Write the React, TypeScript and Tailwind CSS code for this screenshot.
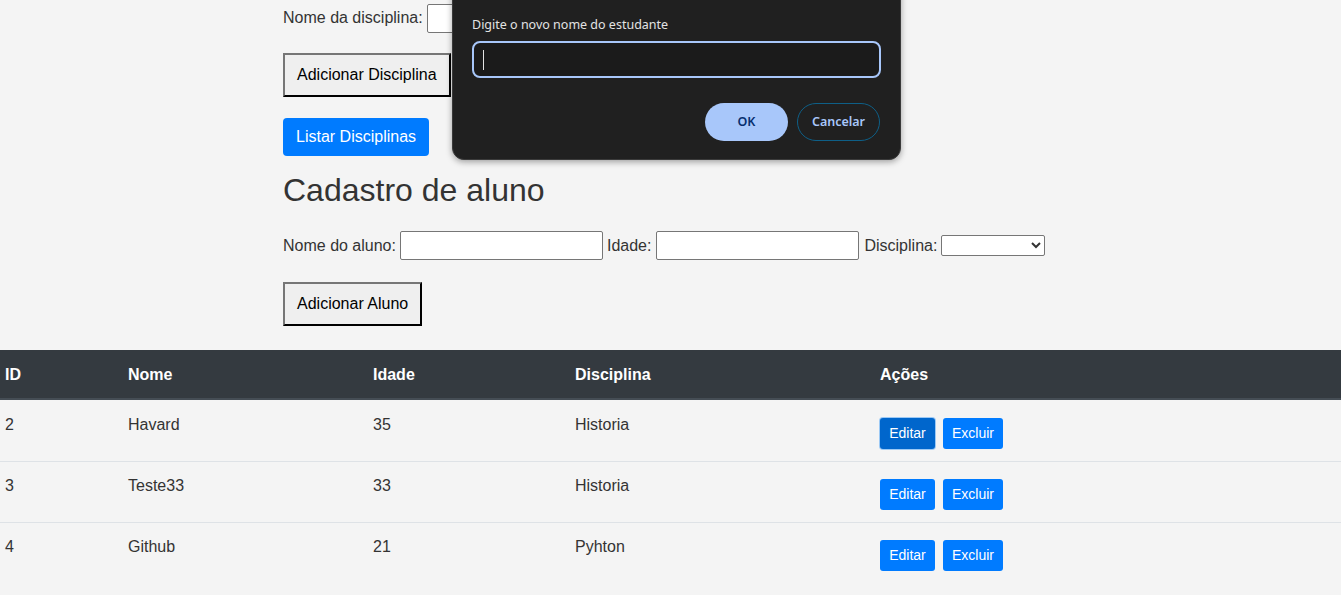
import React from 'react';

// linhas da tabela de alunos
const ALUNOS = [
  { id: 2, nome: 'Havard', idade: 35, disciplina: 'Historia' },
  { id: 3, nome: 'Teste33', idade: 33, disciplina: 'Historia' },
  { id: 4, nome: 'Github', idade: 21, disciplina: 'Pyhton' },
];

const COLS = 'grid grid-cols-[123px_245px_202px_305px_1fr]';

const GrayButton = ({ children }: { children: React.ReactNode }) => (
  <button
    type="button"
    className="h-[44px] px-[12px] bg-[#efefef] text-black text-[16px] border-2 border-t-[#767676] border-l-[#767676] border-b-black border-r-black"
  >
    {children}
  </button>
);

const TextInput = () => (
  <input
    type="text"
    className="w-[203px] h-[29px] bg-white border border-[#767676] rounded-[2px] outline-none"
  />
);

export default function App() {
  return (
    <div
      className="relative w-[1341px] h-[595px] overflow-hidden bg-[#f4f4f4] text-[#333] text-[16px]"
      style={{ fontFamily: '"Liberation Sans", Arial, sans-serif' }}
    >
      {/* formulários */}
      <div className="pl-[283px] pt-[4px] flex flex-col items-start">
        <div className="flex items-center h-[28px] gap-[4px]">
          <span>Nome da disciplina:</span>
          <TextInput />
        </div>

        <div className="mt-[21px]">
          <GrayButton>Adicionar Disciplina</GrayButton>
        </div>

        <button
          type="button"
          className="mt-[21px] h-[38px] px-[13px] rounded-[4px] bg-[#007bff] text-white text-[16px]"
        >
          Listar Disciplinas
        </button>

        <h2 className="mt-[16px] text-[32px] leading-[37px] text-[#333]">Cadastro de aluno</h2>

        <div className="mt-[22px] flex items-center h-[29px] gap-[4px]">
          <span>Nome do aluno:</span>
          <TextInput />
          <span>Idade:</span>
          <div className="ml-[1px]">
            <TextInput />
          </div>
          <span className="ml-[1px]">Disciplina:</span>
          <select className="w-[104px] h-[21px] bg-white border border-[#767676] rounded-[2px] text-[13px]" />
        </div>

        <div className="mt-[22px]">
          <GrayButton>Adicionar Aluno</GrayButton>
        </div>
      </div>

      {/* tabela */}
      <div className="mt-[24px] w-full">
        <div className={`${COLS} h-[50px] pt-[2px] bg-[#343a40] border-b-2 border-[#454d55] text-white font-bold items-center`}>
          <div className="pl-[5px]">ID</div>
          <div className="pl-[5px]">Nome</div>
          <div className="pl-[5px]">Idade</div>
          <div className="pl-[5px]">Disciplina</div>
          <div className="pl-[5px]">Ações</div>
        </div>
        {ALUNOS.map((a, i) => (
          <div
            key={a.id}
            className={`${COLS} h-[61px] items-start border-t ${i > 0 ? 'border-[#dee2e6]' : 'border-transparent'}`}
          >
            <div className="pl-[5px] pt-[12px]">{a.id}</div>
            <div className="pl-[5px] pt-[12px]">{a.nome}</div>
            <div className="pl-[5px] pt-[12px]">{a.idade}</div>
            <div className="pl-[5px] pt-[12px]">{a.disciplina}</div>
            <div className="pl-[5px] pt-[17px] flex gap-[8px]">
              <button
                type="button"
                className={
                  i === 0
                    ? 'h-[31px] w-[55px] rounded-[3px] bg-[#0066cc] text-white text-[14px] ring-1 ring-[#9cc9f5]'
                    : 'h-[31px] w-[55px] rounded-[3px] bg-[#007bff] text-white text-[14px]'
                }
              >
                Editar
              </button>
              <button
                type="button"
                className="h-[31px] w-[60px] rounded-[3px] bg-[#007bff] text-white text-[14px]"
              >
                Excluir
              </button>
            </div>
          </div>
        ))}
      </div>

      {/* prompt do navegador */}
      <div
        className="absolute left-[452px] top-[-40px] w-[449px] h-[200px] bg-[#202020] rounded-[12px] border border-[#3a3a3a] shadow-[0_2px_6px_rgba(0,0,0,0.35)] pl-[19px] pr-[20px] pt-[55px]"
        style={{ fontFamily: '"Noto Sans", "Open Sans", sans-serif' }}
      >
        <div className="text-[12.5px] leading-[18px] text-[#e3e3e3]">Digite o novo nome do estudante</div>
        <div className="mt-[7px] h-[37px] w-[409px] rounded-[8px] border-2 border-[#a8c7fa] bg-[#1b1b1b] flex items-center pl-[9px]">
          <span className="w-px h-[20px] bg-[#e3e3e3]" />
        </div>
        <div className="mt-[25px] flex justify-end gap-[9px]">
          <button
            type="button"
            className="h-[38px] w-[83px] rounded-full bg-[#a8c7fa] text-[#062e6f] text-[12.5px] font-semibold"
          >
            OK
          </button>
          <button
            type="button"
            className="h-[38px] w-[83px] rounded-full border border-[#0e5f87] text-[#a8c7fa] text-[12.5px] font-semibold"
          >
            Cancelar
          </button>
        </div>
      </div>
    </div>
  );
}
